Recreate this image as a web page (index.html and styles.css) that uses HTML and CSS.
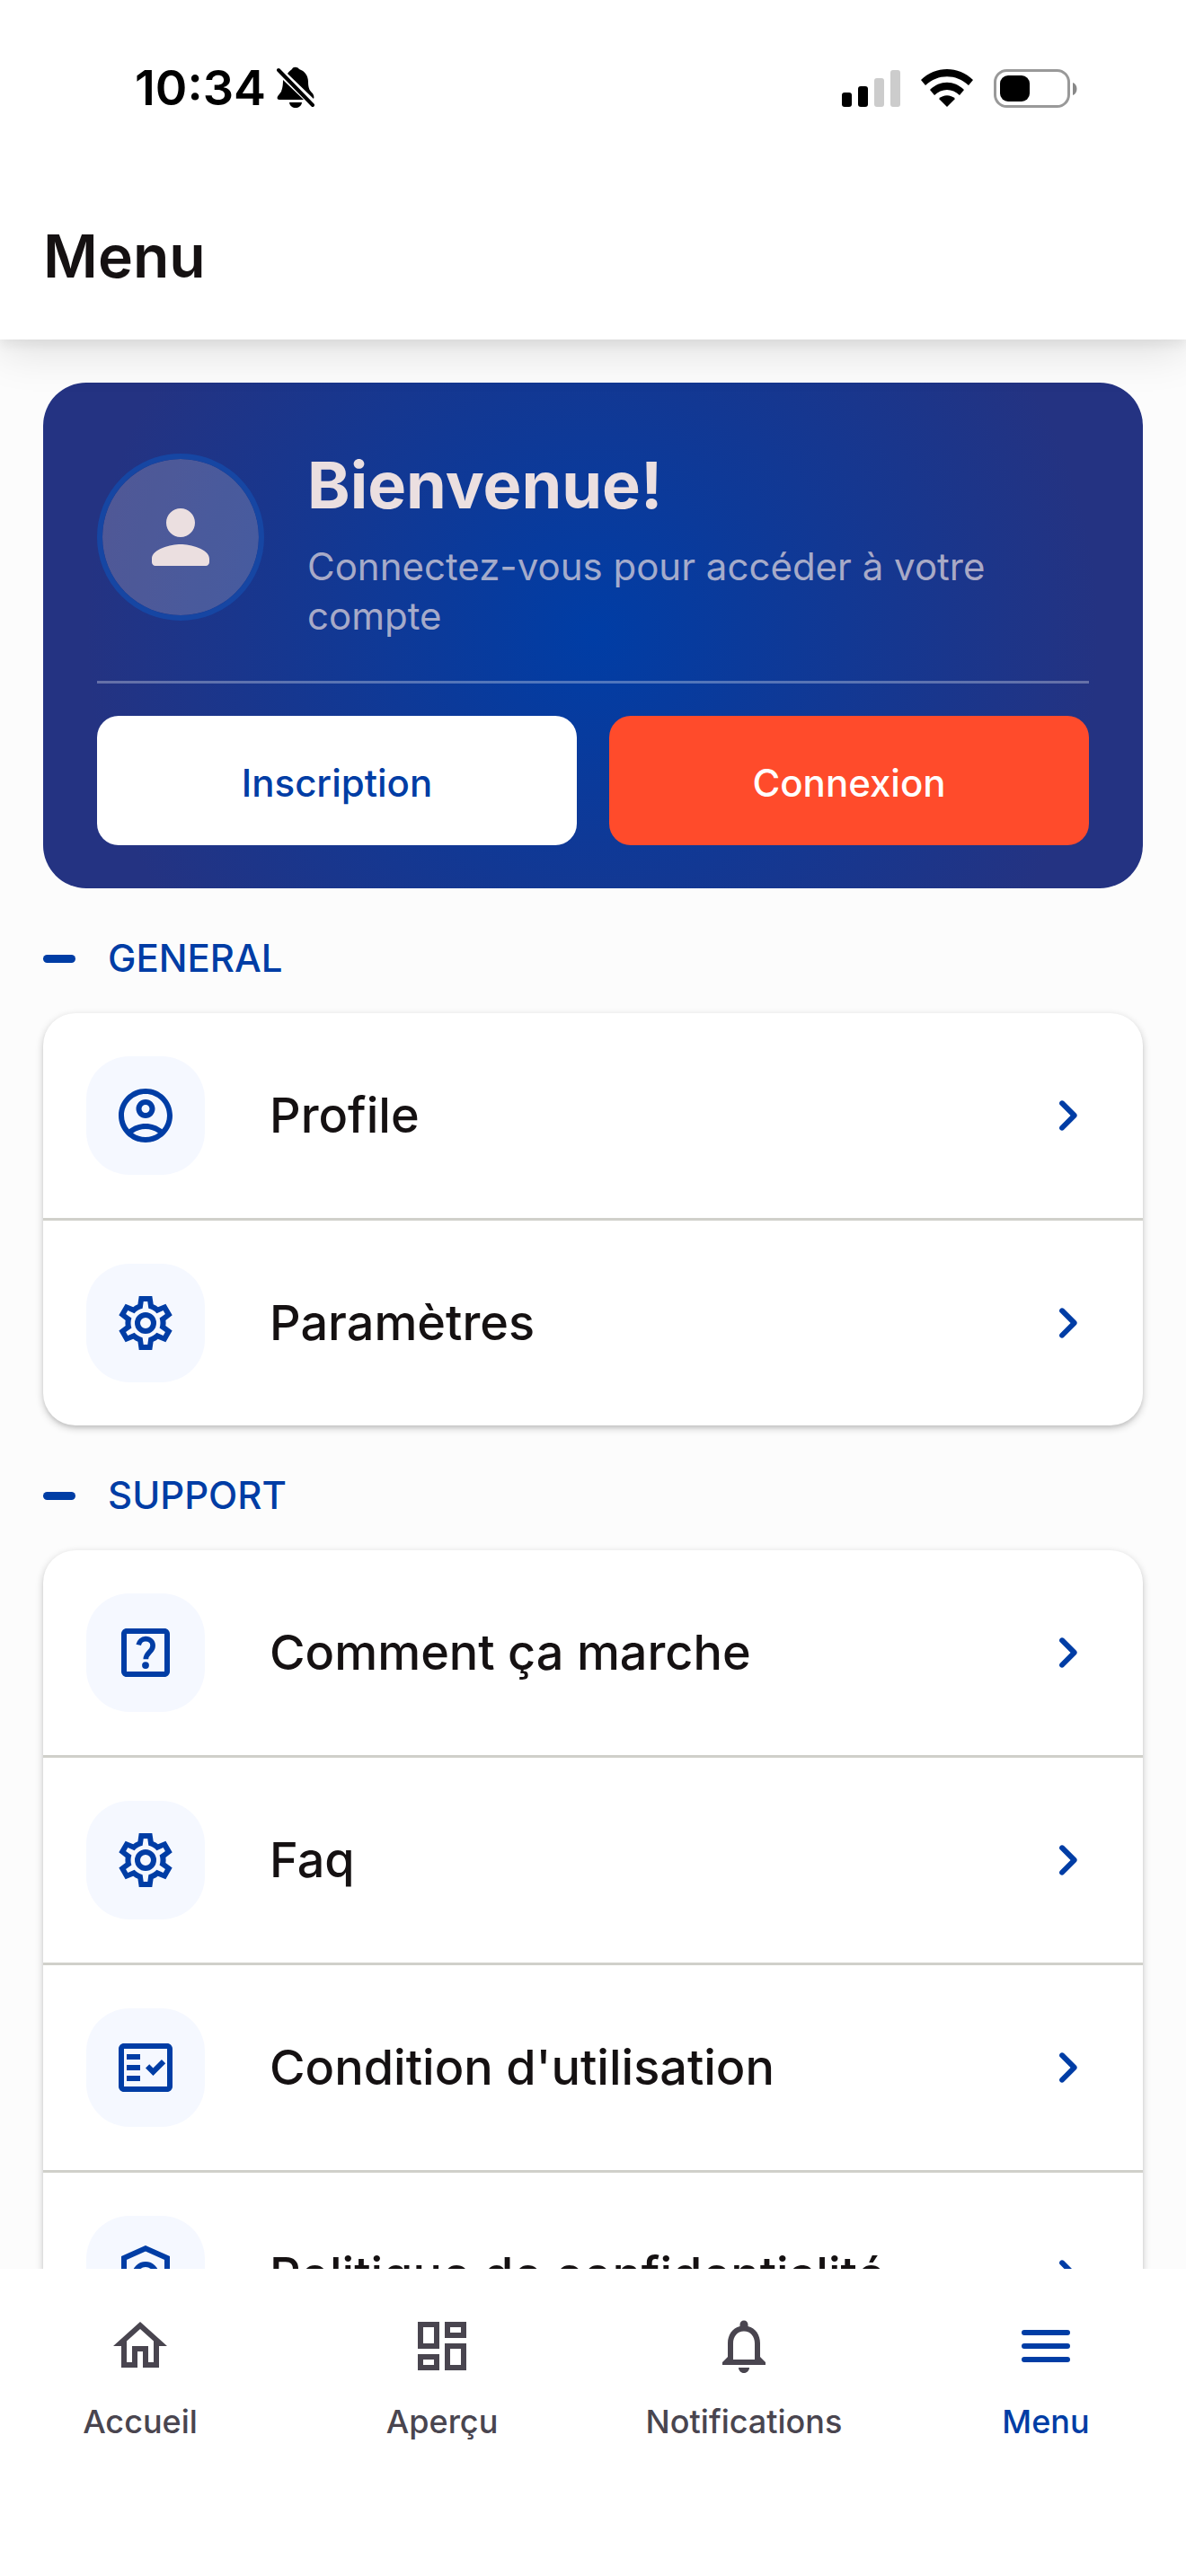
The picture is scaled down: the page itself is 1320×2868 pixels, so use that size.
FILE: index.html
```html
<!DOCTYPE html>
<html lang="fr">
<head>
<meta charset="utf-8">
<meta name="viewport" content="width=device-width, initial-scale=1">
<title>Menu</title>
<link rel="stylesheet" href="styles.css">
</head>
<body>
<svg class="sprite" aria-hidden="true">
  <symbol id="chevron" viewBox="0 0 24 24"><path d="M9.29 6.71c-.39.39-.39 1.02 0 1.41L13.17 12l-3.88 3.88c-.39.39-.39 1.02 0 1.41.39.39 1.02.39 1.41 0l4.59-4.59c.39-.39.39-1.02 0-1.41L10.7 6.7c-.38-.38-1.02-.38-1.41.01z"/></symbol>
  <symbol id="gear" viewBox="0 0 24 24"><path fill-rule="evenodd" d="M19.44 12.99c.05-.33.09-.65.09-.99 0-.34-.03-.66-.07-.98l2.45-1.92-2.43-4.22-2.86 1.17c-.52-.4-1.09-.74-1.71-1L14.44 2H9.57l-.44 3.07c-.62.26-1.19.6-1.71 1L4.55 4.9 2.11 9.12l2.44 1.9c-.04.33-.07.65-.07.98 0 .34.03.66.08.98l-2.44 1.89 2.43 4.2 2.87-1.15c.53.41 1.1.75 1.72 1.01L9.58 22h4.85l.44-3.07c.62-.26 1.2-.6 1.72-1.01l2.87 1.15 2.43-4.2zM11.25 4L10.88 6.61C9.68 6.86 8.62 7.5 7.85 8.39L5.44 7.35L4.69 8.65L6.8 10.2C6.4 11.37 6.4 12.64 6.8 13.8L4.68 15.36L5.43 16.66L7.86 15.62C8.63 16.5 9.68 17.14 10.87 17.38L11.24 20H12.76L13.13 17.39C14.32 17.14 15.37 16.5 16.14 15.62L18.57 16.66L19.32 15.36L17.2 13.81C17.6 12.64 17.6 11.37 17.2 10.2L19.31 8.65L18.56 7.35L16.15 8.39C15.38 7.5 14.32 6.86 13.12 6.62L12.75 4zM12 8a4 4 0 1 1 0 8 4 4 0 0 1 0-8zM12 10a2 2 0 1 0 0 4 2 2 0 0 0 0-4z"/></symbol>
</svg>

<div class="app">
  <header class="topbar">
    <div class="status">
      <div class="status-left">
        <span class="time">10:34</span>
        <svg class="silent" viewBox="0 0 42 48" aria-label="Silencieux">
          <path d="M5 28C6 25 7 22 7 15L30 37H3C0 37 0 34 2 32zM12 8C14 5 16 4 17 3c1-3 6-3 8 0 6 2 10 7 10 14 0 8 2 10 5 13 1 2 2 4 1 6zM14 40h14c-1 8-13 8-14 0z"/>
          <path d="M2 4L40 43" fill="none" stroke="#000" stroke-width="4" stroke-linecap="round"/>
        </svg>
      </div>
      <div class="status-right">
        <svg class="signal" viewBox="0 0 65 41" aria-label="Signal">
          <rect x="0" y="25" width="11" height="16" rx="3"/>
          <rect x="18" y="18" width="11" height="23" rx="3"/>
          <rect x="36" y="9" width="11" height="32" rx="3" fill="#ccc"/>
          <rect x="54" y="0" width="11" height="41" rx="3" fill="#ccc"/>
        </svg>
        <svg class="wifi" viewBox="0 0 58 42" aria-label="Wi-Fi">
          <path d="M0 12C16-4 42-4 58 12l-5 6C39 5 19 5 5 18z"/>
          <path d="M10 23c11-11 27-11 38 0l-5 6c-8-8-20-8-28 0z"/>
          <path d="M20 33c5-5 13-5 18 0l-9 9z"/>
        </svg>
        <svg class="battery" viewBox="0 0 94 43" aria-label="Batterie">
          <rect x="1.5" y="1.5" width="82" height="40" rx="13" fill="none" stroke="#999" stroke-width="3"/>
          <rect x="7" y="7" width="33" height="29" rx="9"/>
          <path d="M88 15c6 2 6 12 0 14z" fill="#888"/>
        </svg>
      </div>
    </div>
    <h1 class="title">Menu</h1>
  </header>

  <main class="content">
    <section class="hero">
      <div class="hero-head">
        <div class="avatar">
          <svg class="avatar-icon" viewBox="0 0 24 24" aria-hidden="true"><path d="M12 12c2.21 0 4-1.79 4-4s-1.79-4-4-4-4 1.79-4 4 1.79 4 4 4zm0 2c-2.67 0-8 1.34-8 4v1c0 .55.45 1 1 1h14c.55 0 1-.45 1-1v-1c0-2.66-5.33-4-8-4z"/></svg>
        </div>
        <div class="hero-text">
          <h2 class="hero-title">Bienvenue!</h2>
          <p class="hero-sub">Connectez-vous pour accéder à votre compte</p>
        </div>
      </div>
      <div class="hero-actions">
        <button type="button" class="btn btn-light">Inscription</button>
        <button type="button" class="btn btn-accent">Connexion</button>
      </div>
    </section>

    <section>
      <h2 class="section-title">GENERAL</h2>
      <div class="list">
        <a class="row" href="#profile">
          <span class="tile"><svg class="icon" viewBox="0 0 24 24" aria-hidden="true"><path d="M12 2C6.48 2 2 6.48 2 12s4.48 10 10 10 10-4.48 10-10S17.52 2 12 2zM7.35 18.5C8.66 17.56 10.26 17 12 17s3.34.56 4.65 1.5C15.34 19.44 13.74 20 12 20s-3.34-.56-4.65-1.5zm10.79-1.38C16.45 15.8 14.32 15 12 15s-4.45.8-6.14 2.12C4.7 15.73 4 13.95 4 12c0-4.42 3.58-8 8-8s8 3.58 8 8c0 1.95-.7 3.73-1.86 5.12zM12 6c-1.93 0-3.5 1.57-3.5 3.5S10.07 13 12 13s3.5-1.57 3.5-3.5S13.93 6 12 6zm0 5c-.83 0-1.5-.67-1.5-1.5S11.17 8 12 8s1.5.67 1.5 1.5S12.83 11 12 11z"/></svg></span>
          <span class="label">Profile</span>
          <svg class="icon" aria-hidden="true"><use href="#chevron"/></svg>
        </a>
        <a class="row" href="#parametres">
          <span class="tile"><svg class="icon" aria-hidden="true"><use href="#gear"/></svg></span>
          <span class="label">Paramètres</span>
          <svg class="icon" aria-hidden="true"><use href="#chevron"/></svg>
        </a>
      </div>
    </section>

    <section>
      <h2 class="section-title">SUPPORT</h2>
      <div class="list">
        <a class="row" href="#comment">
          <span class="tile"><svg class="icon" viewBox="0 0 24 24" aria-hidden="true"><path d="M19 3H5c-1.1 0-2 .9-2 2v14c0 1.1.9 2 2 2h14c1.1 0 2-.9 2-2V5c0-1.1-.9-2-2-2zm0 16H5V5h14v14z"/><path d="M9.4 9.1C9.7 7.8 10.7 6.9 12 6.9c1.6 0 2.7 1.1 2.7 2.5 0 2.3-2.6 2.6-2.6 5" fill="none" stroke="currentColor" stroke-width="1.9"/><circle cx="12" cy="16.7" r="1.3"/></svg></span>
          <span class="label">Comment ça marche</span>
          <svg class="icon" aria-hidden="true"><use href="#chevron"/></svg>
        </a>
        <a class="row" href="#faq">
          <span class="tile"><svg class="icon" aria-hidden="true"><use href="#gear"/></svg></span>
          <span class="label">Faq</span>
          <svg class="icon" aria-hidden="true"><use href="#chevron"/></svg>
        </a>
        <a class="row" href="#conditions">
          <span class="tile"><svg class="icon" viewBox="0 0 24 24" aria-hidden="true"><path d="M20 3H4c-1.1 0-2 .9-2 2v14c0 1.1.9 2 2 2h16c1.1 0 2-.9 2-2V5c0-1.1-.9-2-2-2zm0 16H4V5h16v14z"/><path d="M19.41 10.42L17.99 9l-3.17 3.17-1.41-1.42L12 12.16 14.82 15zM5 7h5v2H5zM5 11h5v2H5zM5 15h5v2H5z"/></svg></span>
          <span class="label">Condition d'utilisation</span>
          <svg class="icon" aria-hidden="true"><use href="#chevron"/></svg>
        </a>
        <a class="row" href="#confidentialite">
          <span class="tile"><svg class="icon" viewBox="0 0 24 24" aria-hidden="true"><g fill="none" stroke="currentColor" stroke-width="2"><path d="M12 2.1L4 5.65V11c0 4.5 3.2 9 8 10.9 4.8-1.9 8-6.4 8-10.9V5.65z"/><circle cx="12" cy="12" r="4"/><path d="M15 15l3.5 3.5"/></g></svg></span>
          <span class="label">Politique de confidentialité</span>
          <svg class="icon" aria-hidden="true"><use href="#chevron"/></svg>
        </a>
      </div>
    </section>
  </main>

  <nav class="tabs">
    <div class="tabs-row">
      <a class="tab" href="#accueil">
        <svg class="icon" viewBox="0 0 24 24" aria-hidden="true"><path d="M12 5.69l5 4.5V18h-2v-6H9v6H7v-7.81l5-4.5M12 3L2 12h3v8h6v-6h2v6h6v-8h3L12 3z"/></svg>
        <span>Accueil</span>
      </a>
      <a class="tab" href="#apercu">
        <svg class="icon" viewBox="0 0 24 24" aria-hidden="true"><path d="M19 5v2h-4V5h4M9 5v6H5V5h4m10 8v6h-4v-6h4M9 17v2H5v-2h4M21 3h-8v6h8V3zM11 3H3v10h8V3zm10 8h-8v10h8V11zm-10 4H3v6h8v-6z"/></svg>
        <span>Aperçu</span>
      </a>
      <a class="tab" href="#notifications">
        <svg class="icon" viewBox="0 0 24 24" aria-hidden="true"><path d="M12 22c1.1 0 2-.9 2-2h-4c0 1.1.9 2 2 2zm6-6v-5c0-3.07-1.63-5.64-4.5-6.32V4c0-.83-.67-1.5-1.5-1.5s-1.5.67-1.5 1.5v.68C7.64 5.36 6 7.92 6 11v5l-2 2v1h16v-1l-2-2zm-2 1H8v-6c0-2.48 1.51-4.5 4-4.5s4 2.02 4 4.5v6z"/></svg>
        <span>Notifications</span>
      </a>
      <a class="tab tab-active" href="#menu" aria-current="page">
        <svg class="icon" viewBox="0 0 24 24" aria-hidden="true"><path d="M4 7h16M4 12h16M4 17h16" fill="none" stroke="currentColor" stroke-width="2" stroke-linecap="round"/></svg>
        <span>Menu</span>
      </a>
    </div>
  </nav>
</div>
</body>
</html>
```
FILE: styles.css
```css
:root {
  --blue: #003da5;
  --ink: #151112;
  --rose: #ebdfe0;
}

* { box-sizing: border-box; }

body {
  margin: 0;
  background: #fcfcfc;
  color: var(--ink);
  font-family: Inter, "Liberation Sans", sans-serif;
}

h1, h2, p { margin: 0; }

a { color: inherit; text-decoration: none; }

svg { display: block; flex: none; }

.sprite { display: none; }

.app {
  display: flex;
  flex-direction: column;
  height: 100vh;
}

/* Top bar */
.topbar {
  position: relative;
  z-index: 1;
  background: #fff;
  box-shadow: 0 6px 12px rgba(0, 0, 0, .06), 0 12px 48px rgba(0, 0, 0, .12);
}

.status {
  display: flex;
  justify-content: space-between;
  align-items: center;
  height: 186px;
  padding: 10px 120px 0 150px;
}

.status-left, .status-right { display: flex; align-items: center; }
.status-left { gap: 12px; }
.status-right { gap: 23px; }

.time {
  color: #000;
  font-size: 54px;
  font-weight: 600;
  line-height: 66px;
}

.silent { width: 42px; height: 48px; }
.signal { width: 65px; height: 41px; }
.wifi { width: 58px; height: 42px; }
.battery { width: 94px; height: 43px; }

.title {
  padding: 6px 48px 0;
  font-size: 66px;
  font-weight: 600;
  line-height: 186px;
}

/* Scrolling content */
.content {
  flex: 1;
  min-height: 0;
  padding: 48px;
  overflow-y: auto;
  scrollbar-width: none;
}

.hero {
  padding: 57px 60px 48px;
  border-radius: 48px;
  background: radial-gradient(circle 563px, var(--blue), #243382);
}

.hero-head {
  display: flex;
  align-items: center;
  gap: 48px;
  padding-bottom: 45px;
  border-bottom: 3px solid rgba(255, 255, 255, .3);
}

.avatar {
  display: flex;
  flex: none;
  justify-content: center;
  align-items: center;
  width: 186px;
  height: 186px;
  border: 6px solid #1646a3;
  border-radius: 50%;
  background: rgba(235, 223, 224, .22);
  background-clip: padding-box;
}

.avatar-icon { width: 96px; height: 96px; fill: var(--rose); }

.hero-text { min-width: 0; }

.hero-title {
  color: var(--rose);
  font-size: 72px;
  font-weight: 700;
  line-height: 114px;
}

.hero-sub {
  margin-top: 6px;
  color: rgba(235, 223, 224, .7);
  font-size: 42px;
  line-height: 55px;
}

.hero-actions {
  display: grid;
  grid-template-columns: 1fr 1fr;
  gap: 36px;
  margin-top: 36px;
}

.btn {
  height: 144px;
  padding: 6px 24px 0;
  border: 0;
  border-radius: 24px;
  font: 500 42px/60px Inter, "Liberation Sans", sans-serif;
}

.btn-light { background: #fff; color: var(--blue); }
.btn-accent { background: #ff4b2b; color: #fff; }

.section-title {
  display: flex;
  align-items: center;
  gap: 36px;
  padding: 48px 0 31px;
  color: var(--blue);
  font-size: 42px;
  font-weight: 500;
  line-height: 60px;
}

.section-title::before {
  content: "";
  width: 36px;
  height: 9px;
  border-radius: 5px;
  background: var(--blue);
}

.list {
  border-radius: 36px;
  background: #fff;
  box-shadow: 0 3px 9px rgba(0, 0, 0, .22), 0 3px 3px rgba(0, 0, 0, .05);
}

.row {
  display: flex;
  align-items: center;
  padding: 48px;
}

.row + .row { border-top: 3px solid #d0d0ca; }

.tile {
  display: flex;
  flex: none;
  justify-content: center;
  align-items: center;
  width: 132px;
  height: 132px;
  border-radius: 48px;
  background: #f5f8ff;
}

.icon { width: 72px; height: 72px; fill: currentColor; }

.row .icon { color: var(--blue); }

.label {
  flex: 1;
  padding-left: 72px;
  font-size: 54px;
  font-weight: 500;
  line-height: 72px;
}

/* Bottom tabs */
.tabs {
  padding: 50px 0 148px;
  overflow: hidden;
  background: #fff;
}

.tabs-row {
  display: grid;
  grid-template-columns: repeat(4, 1fr);
  margin: 0 -12px;
}

.tab {
  display: flex;
  flex-direction: column;
  align-items: center;
  gap: 24px;
  color: #49454f;
  font-size: 36px;
  font-weight: 500;
  line-height: 48px;
}

.tab-active { color: var(--blue); }
```
